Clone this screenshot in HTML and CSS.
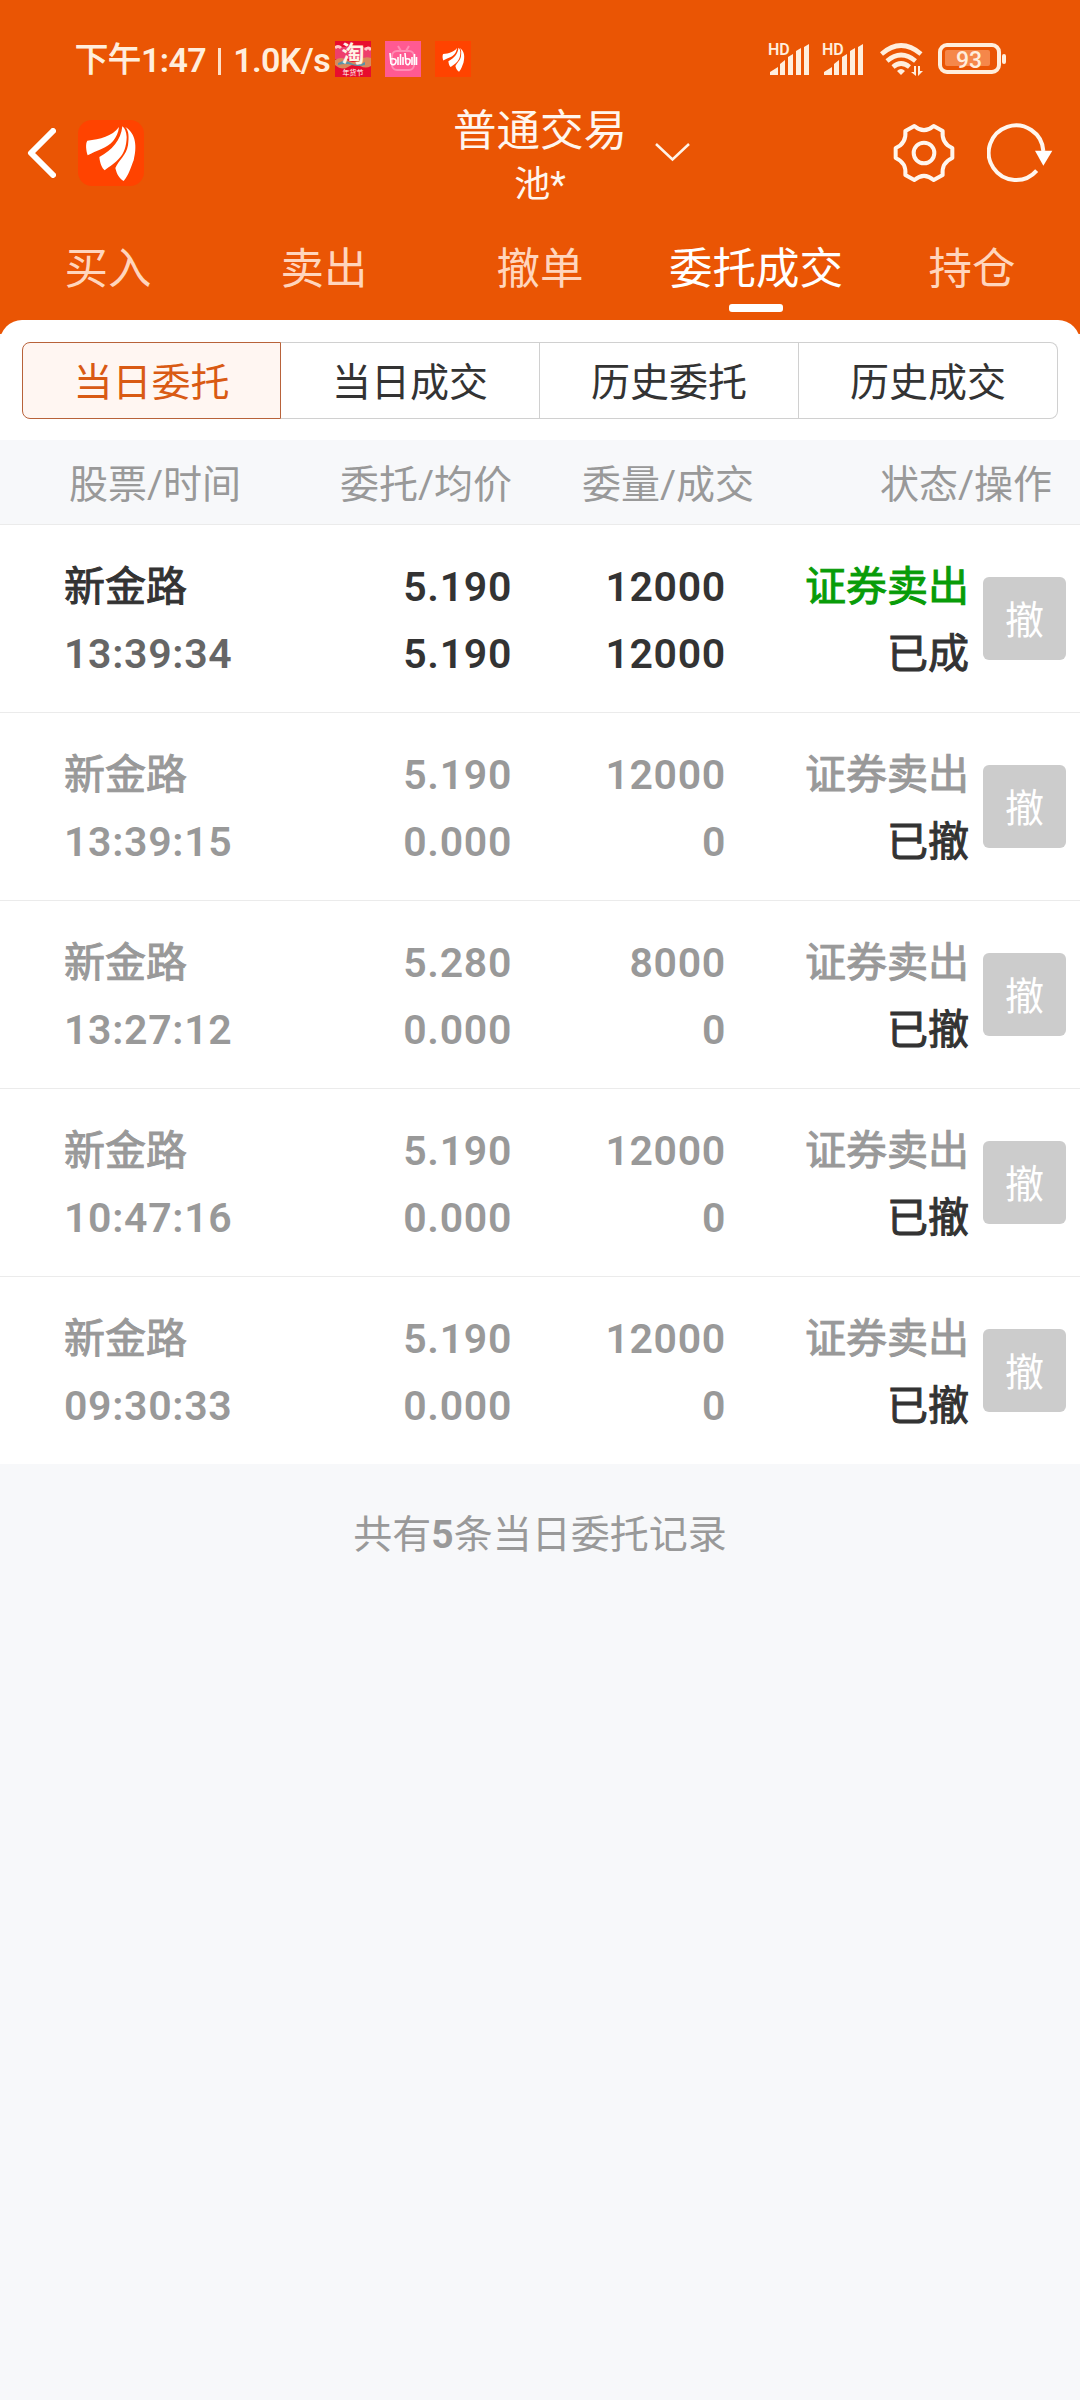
FILE: index.html
```
<!DOCTYPE html>
<html lang="zh-CN">

<head>
    <meta charset="UTF-8">
    <meta name="viewport" content="width=device-width, initial-scale=1.0">
    <title>委托成交</title>
    <link rel="stylesheet" href="styles.css">
</head>

<body>
    <svg class="defs" width="0" height="0">
        <symbol id="logo" viewBox="233 59 198 198">
            <path d="M261 121C300 117 335 108 356 80C352 115 330 135 305 145C288 152 275 158 262 165C257 150 255 130 261 121Z" />
            <path d="M366 78C362 120 335 150 297 170C299 190 305 203 313 210C345 185 378 170 379 110C378 95 374 84 366 78Z" />
            <path d="M375 80C386 92 386 110 383 135C378 165 355 180 345 203C350 225 360 237 370 242C385 225 392 200 400 180C410 140 408 100 375 80Z" />
        </symbol>
    </svg>

    <header class="header">
        <div class="status-bar">
            <span class="clock"><em>下午</em>1:47<i></i>1.0K/s</span>
            <div class="apps">
                <svg width="36" height="36" viewBox="0 0 36 36">
                    <rect width="36" height="36" fill="#e80d2e" />
                    <path d="M0 6h36v12H0z" fill="#ee3f6c" />
                    <path d="M0 24V19q6-4 12 0t12 0t12-2v8q-5 3-11 0t-12 1t-13-2z" fill="#d98a5b" />
                    <path d="M3 22q7-4 13 0t14-1v3q-7 2-13 0t-14 0z" fill="#5a93a8" />
                    <path d="M0 7q3-3 6 0M30 9q3-4 6 0" stroke="#ffc8c8" stroke-width="3" fill="none" />
                    <text x="18" y="21" font-size="23" font-weight="700" text-anchor="middle" fill="#fff3e4">淘</text>
                    <text x="18" y="34" font-size="7" text-anchor="middle" fill="#fff">年货节</text>
                </svg>
                <svg width="36" height="36" viewBox="0 0 36 36">
                    <rect width="36" height="36" fill="#ff5a92" />
                    <path d="M13 5l3 5M24 5l-3 5" stroke="#ff8db4" stroke-width="2" />
                    <rect x="7" y="10" width="22" height="19" rx="5" fill="none" stroke="#ff8db4" stroke-width="2" />
                    <path d="M5 12l1 11M6 18q6-1 5 3t-5 2M13 16v8M15.500 13v11M18 16v8M20 12l1 11M21 18q5-1 4 3t-4 2M27 16v8M29.500 13v11M31.500 16v8" fill="none" stroke="#fff" stroke-width="1.6" />
                </svg>
                <svg class="app-logo" width="36" height="36" viewBox="0 0 36 36">
                    <use href="#logo" x="4" y="4" width="29" height="29" />
                </svg>
            </div>
            <div class="indicators">
                <svg width="43" height="34" viewBox="0 0 43 34">
                    <text class="hd" x="0" y="13">HD</text>
                    <path d="M2 33v-3l8-5v8zM12 33V22l5-4v15zM20 33V15l5-3v21zM28 33V9l5-3v27zM36 33V5l5-3v31z" />
                </svg>
                <svg width="43" height="34" viewBox="0 0 43 34">
                    <text class="hd" x="0" y="13">HD</text>
                    <path d="M2 33v-3l8-5v8zM12 33V22l5-4v15zM20 33V15l5-3v21zM28 33V9l5-3v27zM36 33V5l5-3v31z" />
                </svg>
                <svg class="wifi" width="44" height="34" viewBox="0 0 44 34">
                    <g fill="none" stroke="#ffeedd" stroke-width="4.600">
                        <path d="M1.500 11Q21 -6 41 11" />
                        <path d="M7 18Q21 6 35.500 18" />
                        <path d="M13 24Q21 17 29.500 24" />
                    </g>
                    <path d="M17 28q4-4 8 0l-4 4zM36 23v10l-5-4h3v-6zM38 33V23h2v5h3z" />
                </svg>
                <svg width="70" height="32" viewBox="0 0 70 32">
                    <rect x="2" y="2" width="59" height="27" rx="7" fill="none" stroke="#ffeedd" stroke-width="4" />
                    <rect x="7" y="7" width="45" height="16" rx="2" fill="#f5874a" />
                    <rect x="64" y="11" width="4" height="10" rx="2" />
                    <text x="31" y="24.500" font-size="23" font-weight="500" text-anchor="middle">93</text>
                </svg>
            </div>
        </div>

        <div class="nav-bar">
            <div class="nav-left">
                <svg width="30" height="50" viewBox="0 0 30 50">
                    <path d="M27 3L5 25L27 47" fill="none" stroke="#fff" stroke-width="6" stroke-linecap="round" stroke-linejoin="round" />
                </svg>
                <svg class="brand" width="66" height="66"><use href="#logo" /></svg>
            </div>
            <div class="nav-title">
                <div class="title">普通交易</div>
                <div class="account">池*</div>
                <svg class="arrow" width="35" height="20" viewBox="0 0 35 20">
                    <path d="M1 2L17.500 17.500L34 2" fill="none" stroke="#fff3e8" stroke-width="2.500" />
                </svg>
            </div>
            <div class="nav-right">
                <svg width="62" height="60" viewBox="101 66 186 180" fill="none" stroke="#fff6ee" stroke-width="12" stroke-linejoin="round">
                    <path d="M279 141Q246 127 250 90L223 75Q194 100 165 75L138 90Q142 127 109 141V171Q142 185 138 222L165 237Q194 212 223 237L250 222Q246 185 279 171Z" />
                    <circle cx="194" cy="156" r="31" />
                </svg>
                <svg width="66" height="60" viewBox="380 68 198 180">
                    <path d="M549 152A82 82 0 1 0 529 211" fill="none" stroke="#fff6ee" stroke-width="12" />
                    <path d="M524 151H576L549 196Z" fill="#fff" />
                </svg>
            </div>
        </div>

        <nav class="tabs">
            <a>买入</a>
            <a>卖出</a>
            <a>撤单</a>
            <a class="active">委托成交</a>
            <a>持仓</a>
        </nav>
    </header>

    <main class="panel">
        <div class="segments">
            <button class="active">当日委托</button>
            <button>当日成交</button>
            <button>历史委托</button>
            <button>历史成交</button>
        </div>

        <div class="list-head">
            <span>股票/时间</span>
            <span>委托/均价</span>
            <span>委量/成交</span>
            <span>状态/操作</span>
        </div>

        <div class="row done">
            <div class="stock">新金路<br><span class="time">13:39:34</span></div>
            <div>5.190<br>5.190</div>
            <div>12000<br>12000</div>
            <div class="state"><span class="side">证券卖出</span><br>已成</div>
            <button class="cancel">撤</button>
        </div>
        <div class="row">
            <div class="stock">新金路<br><span class="time">13:39:15</span></div>
            <div>5.190<br>0.000</div>
            <div>12000<br>0</div>
            <div class="state"><span class="side">证券卖出</span><br>已撤</div>
            <button class="cancel">撤</button>
        </div>
        <div class="row">
            <div class="stock">新金路<br><span class="time">13:27:12</span></div>
            <div>5.280<br>0.000</div>
            <div>8000<br>0</div>
            <div class="state"><span class="side">证券卖出</span><br>已撤</div>
            <button class="cancel">撤</button>
        </div>
        <div class="row">
            <div class="stock">新金路<br><span class="time">10:47:16</span></div>
            <div>5.190<br>0.000</div>
            <div>12000<br>0</div>
            <div class="state"><span class="side">证券卖出</span><br>已撤</div>
            <button class="cancel">撤</button>
        </div>
        <div class="row">
            <div class="stock">新金路<br><span class="time">09:30:33</span></div>
            <div>5.190<br>0.000</div>
            <div>12000<br>0</div>
            <div class="state"><span class="side">证券卖出</span><br>已撤</div>
            <button class="cancel">撤</button>
        </div>
    </main>

    <p class="total">共有<b>5</b>条当日委托记录</p>
</body>

</html>
```
FILE: styles.css
```
* {
    box-sizing: border-box;
}

body {
    margin: 0;
    width: 1080px;
    min-height: 2400px;
    background-color: #f7f8fa;
    color: #333;
    font-family: Roboto, "Noto Sans CJK SC", sans-serif;
}

svg {
    display: block;
}

button {
    padding: 0;
    font-family: inherit;
}

.defs {
    position: absolute;
}

.header {
    height: 334px;
    background-color: #ea5504;
}

/* Status bar */
.status-bar {
    display: flex;
    align-items: center;
    height: 118px;
    padding-left: 75px;
    color: #ffeedd;
    fill: #ffeedd;
}

.clock {
    display: flex;
    align-items: center;
    width: 260px;
    padding-top: 2px;
    font-size: 34px;
    font-weight: 600;
    line-height: 40px;
    letter-spacing: -0.6px;
    white-space: nowrap;
}

.clock em {
    font-size: 33px;
    font-style: normal;
    font-weight: 400;
    letter-spacing: 0;
    -webkit-text-stroke: 1px;
}

.clock i {
    width: 3px;
    height: 27px;
    margin: 3px 12px 0;
    background-color: #ffe0c8;
}

.apps {
    display: flex;
    gap: 14px;
}

.app-logo {
    background-color: #ff4300;
    fill: #fff;
}

.indicators {
    display: flex;
    align-items: center;
    margin-left: 297px;
    gap: 11px;
}

.hd {
    font-size: 16px;
    font-weight: 600;
}

.wifi {
    margin: 1px 3px 0 4px;
}

/* Title row */
.nav-bar {
    display: flex;
    justify-content: space-between;
    height: 106px;
    margin-top: -14px;
}

.nav-left {
    display: flex;
    align-items: center;
    width: 300px;
    height: 97px;
    padding-left: 26px;
    gap: 22px;
}

.brand {
    border-radius: 14px;
    background-color: #ff4300;
    fill: #fff;
}

.nav-title {
    position: relative;
    color: #fff6ee;
    text-align: center;
}

.title {
    padding-top: 2px;
    font-size: 43.5px;
    line-height: 52px;
}

.account {
    font-size: 36px;
    line-height: 54px;
}

.arrow {
    position: absolute;
    left: 202px;
    top: 38px;
}

.nav-right {
    display: flex;
    align-items: center;
    justify-content: flex-end;
    width: 300px;
    height: 97px;
    padding-right: 27px;
    gap: 32px;
}

.tabs {
    display: grid;
    grid-template-columns: repeat(5, 1fr);
    grid-template-rows: 102px;
    color: #ffd5bd;
    font-size: 43.5px;
    line-height: 120px;
    text-align: center;
}

.tabs a {
    position: relative;
}

.tabs .active {
    color: #fff;
}

.tabs .active::after {
    content: "";
    position: absolute;
    left: 81px;
    bottom: 0;
    width: 54px;
    height: 8px;
    border-radius: 3px;
    background-color: #fff;
}

/* Order list */
.panel {
    position: relative;
    margin-top: -14px;
    border-radius: 22px 22px 0 0;
    background-color: #fff;
}

.segments {
    display: flex;
    padding: 22px;
    height: 120px;
}

.segments button {
    width: 259px;
    height: 77px;
    padding-bottom: 3px;
    border: 1px solid #d0d0d0;
    border-left-width: 0;
    background-color: #fff;
    color: #333;
    font-size: 39px;
}

.segments button:last-child {
    border-radius: 0 8px 8px 0;
}

.segments .active {
    border: 1px solid #b8623a;
    border-radius: 8px 0 0 8px;
    background-color: #fff6f2;
    color: #d95a14;
}

.list-head {
    display: grid;
    grid-template-columns: 271px 241px 242px 298px;
    height: 84px;
    background-color: #f7f8fa;
    color: #999;
    font-size: 39px;
    line-height: 90px;
    text-align: right;
}

.list-head span:first-child {
    padding-left: 69px;
    text-align: left;
}

.row {
    display: grid;
    grid-template-columns: 271px 241px 214px 243px 83px;
    height: 188px;
    padding-top: 29px;
    border-top: 1px solid #ebebeb;
    color: #999;
    font-size: 41px;
    font-weight: 600;
    line-height: 67px;
    letter-spacing: 0.7px;
    text-align: right;
}

.stock {
    padding-left: 64px;
    text-align: left;
    white-space: nowrap;
}

/* medium weight for the Chinese labels */
.stock,
.state {
    font-weight: 400;
    letter-spacing: 0;
    -webkit-text-stroke: 1px;
}

.state,
.done {
    color: #333;
}

.time {
    color: #999;
    font-weight: 600;
    letter-spacing: 0.7px;
    -webkit-text-stroke: 0;
}

.side {
    color: #999;
}

.done .time {
    color: #666;
}

.done .side {
    color: #089c08;
}

.cancel {
    width: 83px;
    height: 83px;
    margin: 23px 0 0 14px;
    padding-bottom: 3px;
    border: none;
    border-radius: 6px;
    background-color: #ccc;
    color: #fff;
    font-size: 39px;
}

.total {
    margin: 0;
    padding-top: 41px;
    color: #999;
    font-size: 39px;
    line-height: 60px;
    text-align: center;
}
```
